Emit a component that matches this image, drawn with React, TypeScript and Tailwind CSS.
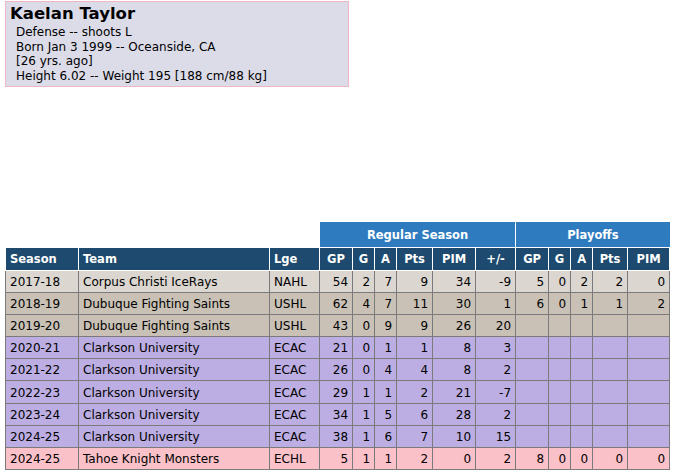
const rows = [
  { season: "2017-18", team: "Corpus Christi IceRays", lge: "NAHL", reg: ["54", "2", "7", "9", "34", "-9"], po: ["5", "0", "2", "2", "0"], bg: "bg-[#dbd6d0]" },
  { season: "2018-19", team: "Dubuque Fighting Saints", lge: "USHL", reg: ["62", "4", "7", "11", "30", "1"], po: ["6", "0", "1", "1", "2"], bg: "bg-[#c9c1b5]" },
  { season: "2019-20", team: "Dubuque Fighting Saints", lge: "USHL", reg: ["43", "0", "9", "9", "26", "20"], po: ["", "", "", "", ""], bg: "bg-[#c9c1b5]" },
  { season: "2020-21", team: "Clarkson University", lge: "ECAC", reg: ["21", "0", "1", "1", "8", "3"], po: ["", "", "", "", ""], bg: "bg-[#bcaee2]" },
  { season: "2021-22", team: "Clarkson University", lge: "ECAC", reg: ["26", "0", "4", "4", "8", "2"], po: ["", "", "", "", ""], bg: "bg-[#bcaee2]" },
  { season: "2022-23", team: "Clarkson University", lge: "ECAC", reg: ["29", "1", "1", "2", "21", "-7"], po: ["", "", "", "", ""], bg: "bg-[#bcaee2]" },
  { season: "2023-24", team: "Clarkson University", lge: "ECAC", reg: ["34", "1", "5", "6", "28", "2"], po: ["", "", "", "", ""], bg: "bg-[#bcaee2]" },
  { season: "2024-25", team: "Clarkson University", lge: "ECAC", reg: ["38", "1", "6", "7", "10", "15"], po: ["", "", "", "", ""], bg: "bg-[#bcaee2]" },
  { season: "2024-25", team: "Tahoe Knight Monsters", lge: "ECHL", reg: ["5", "1", "1", "2", "0", "2"], po: ["8", "0", "0", "0", "0"], bg: "bg-[#fbc1c9]" },
];

const widths = [73, 191, 50, 33, 22, 22, 36, 43, 40, 33, 22, 22, 35, 42];
const statHeads = ["GP", "G", "A", "Pts", "PIM", "+/-", "GP", "G", "A", "Pts", "PIM"];

export default function App() {
  return (
    <div className="w-[674px] h-[473px] bg-white text-black font-['DejaVu_Sans',Verdana,sans-serif] text-[12px] overflow-hidden">
      <div className="ml-[5px] mt-[1px] w-[344px] h-[86px] bg-[#dcdce9] border border-[#f1b6c6] pl-[4px] pt-[1px]">
        <h1 className="text-[16.5px] font-bold leading-[22px]">Kaelan Taylor</h1>
        <div className="pl-[6px] text-[12px] leading-[14.5px]">
          <div>Defense -- shoots L</div>
          <div>Born Jan 3 1999 -- Oceanside, CA</div>
          <div>[26 yrs. ago]</div>
          <div>Height 6.02 -- Weight 195 [188 cm/88 kg]</div>
        </div>
      </div>

      <table className="ml-[5px] mt-[135px] table-fixed border-collapse w-[664px]">
        <colgroup>
          {widths.map((w, i) => (
            <col key={i} style={{ width: w }} />
          ))}
        </colgroup>
        <thead className="text-[11.5px]">
          <tr className="h-[25px]">
            <th colSpan={3} className="p-0"></th>
            <th colSpan={6} className="bg-[#2f7bbf] text-white font-bold border-x border-white pt-[3px] pb-0">Regular Season</th>
            <th colSpan={5} className="bg-[#2f7bbf] text-white font-bold border-l border-white pt-[3px] pb-0">Playoffs</th>
          </tr>
          <tr className="h-[23px] bg-[#1d4a6e] text-white">
            <th className="text-left px-[4px] pt-[2px] pb-0 border border-white font-bold">Season</th>
            <th className="text-left px-[4px] pt-[2px] pb-0 border border-white font-bold">Team</th>
            <th className="text-left px-[4px] pt-[2px] pb-0 border border-white font-bold">Lge</th>
            {statHeads.map((h, i) => (
              <th key={i} className="text-center px-0 pt-[2px] pb-0 border border-white font-bold">{h}</th>
            ))}
          </tr>
        </thead>
        <tbody>
          {rows.map((r, i) => (
            <tr key={i} className={`h-[22.2px] ${r.bg}`}>
              <td className="px-[4px] pt-[1px] pb-0 border border-[#7a7a7a]">{r.season}</td>
              <td className="px-[4px] pt-[1px] pb-0 border border-[#7a7a7a]">{r.team}</td>
              <td className="px-[4px] pt-[1px] pb-0 border border-[#7a7a7a]">{r.lge}</td>
              {[...r.reg, ...r.po].map((v, j) => (
                <td key={j} className="px-[4px] pt-[1px] pb-0 text-right border border-[#7a7a7a]">{v}</td>
              ))}
            </tr>
          ))}
        </tbody>
      </table>
    </div>
  );
}
